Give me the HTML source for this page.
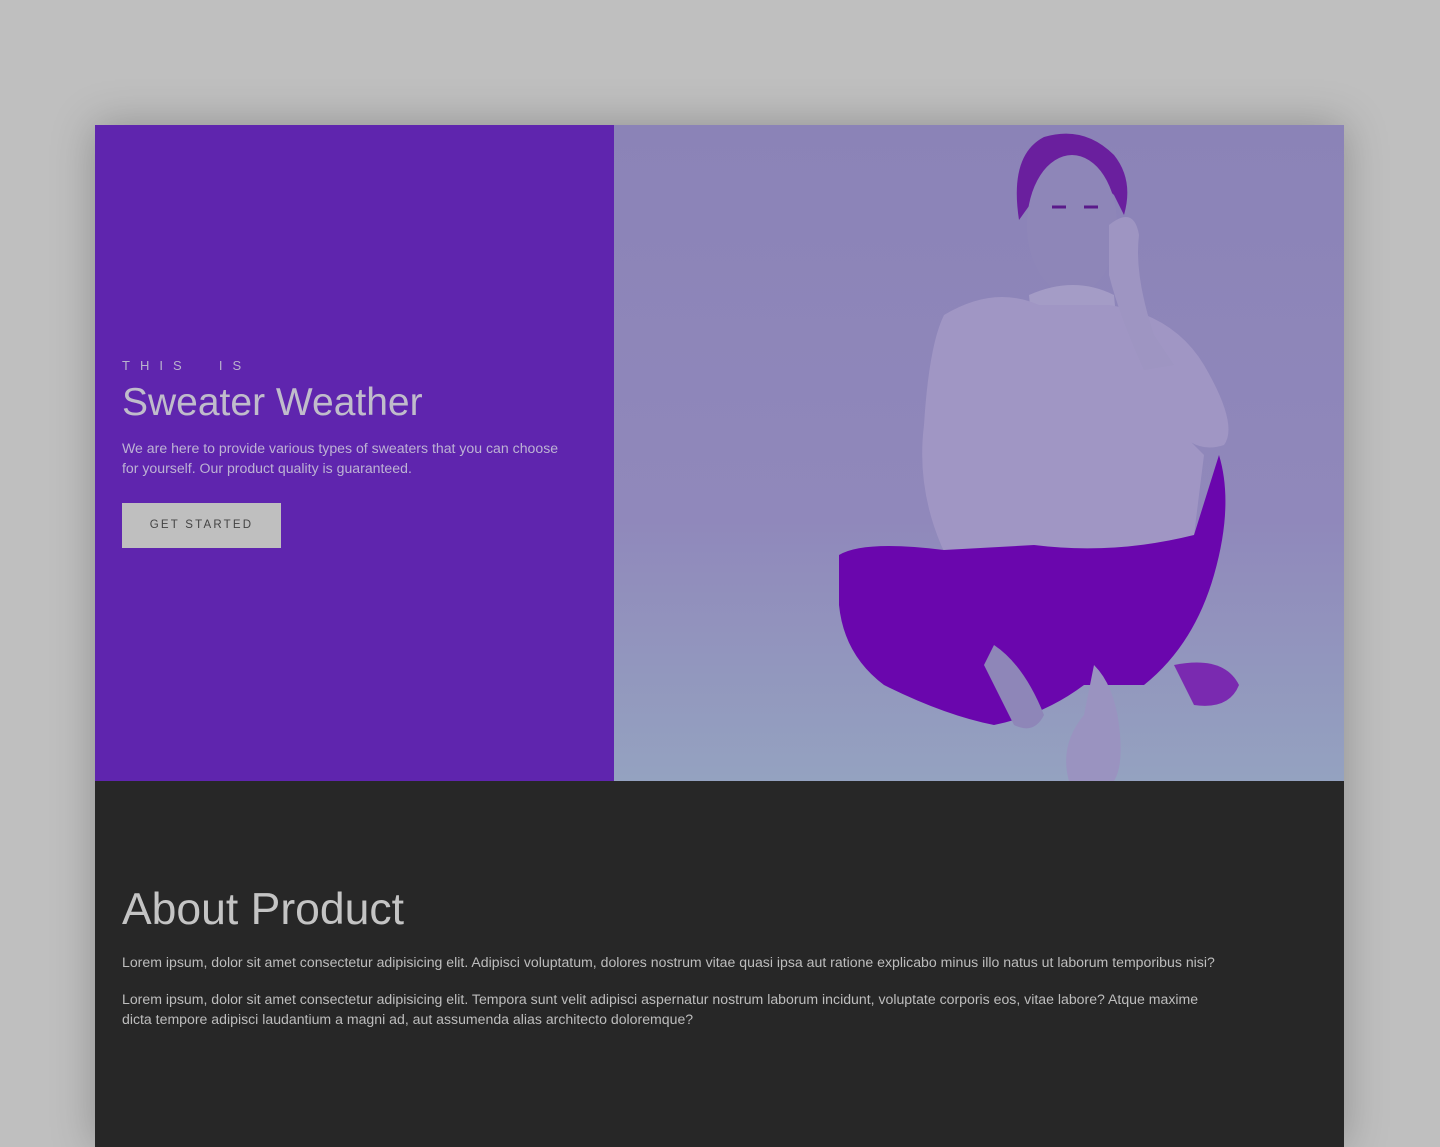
<!DOCTYPE html>
<html><head><meta charset="utf-8">
<style>
*{margin:0;padding:0;box-sizing:border-box}
html,body{width:1440px;height:1147px;overflow:hidden;background:#bfbfbf;font-family:"Liberation Sans",sans-serif}
.card{position:absolute;left:95px;top:125px;width:1249px;height:1022px;box-shadow:0 0 40px rgba(0,0,0,.25)}
.left{position:absolute;left:0;top:0;width:519px;height:656px;background:#5f25ae}
.right{position:absolute;left:519px;top:0;width:730px;height:656px;overflow:hidden}
.dark{position:absolute;left:0;top:656px;width:1249px;height:366px;background:#272727}
.t{position:absolute;left:27px;color:#bdbdbd;white-space:nowrap}
</style></head><body>
<div class="card">
<div class="left">
<div class="t" style="top:233px;font-size:13px;letter-spacing:10px;color:#b9b3cc">THIS&nbsp;&nbsp;IS</div>
<div class="t" style="top:256px;font-size:39px;color:#c0bccb">Sweater Weather</div>
<div class="t" style="top:313px;font-size:14.1px;line-height:20px;color:#bdb3d4">We are here to provide various types of sweaters that you can choose<br>for yourself. Our product quality is guaranteed.</div>
<div style="position:absolute;left:27px;top:378px;width:159px;height:45px;background:#bfbfbf;color:#444;font-size:11.5px;letter-spacing:2.2px;text-align:center;line-height:45px">GET STARTED</div>
</div>
<div class="right">
<svg width="730" height="656" viewBox="0 0 730 656">
<defs><linearGradient id="bg" x1="0" y1="0" x2="0" y2="1"><stop offset="0" stop-color="#8b83b7"/><stop offset="0.6" stop-color="#9088bb"/><stop offset="1" stop-color="#94a2c0"/></linearGradient></defs>
<rect width="730" height="656" fill="url(#bg)"/>
<path d="M405 95 Q395 30 430 12 Q470 0 500 30 Q520 55 510 90 L500 70 Q470 40 430 60 Z" fill="#6a1f9e"/>
<ellipse cx="458" cy="100" rx="45" ry="70" fill="#8e86b8"/>
<path d="M438 82 h14 M470 82 h14" stroke="#5a1a8a" stroke-width="3"/>
<path d="M415 170 Q460 150 500 170 L505 225 Q460 235 420 225 Z" fill="#a49cc6"/>
<path d="M330 190 Q380 160 425 180 L495 180 Q560 190 590 240 Q625 300 610 320 Q580 330 560 300 L590 330 L580 410 Q500 430 420 420 L380 470 Q360 480 345 455 Q300 380 310 300 Q315 220 330 190 Z" fill="#a096c4"/>
<path d="M495 100 Q520 80 525 110 Q520 150 540 210 L560 240 L530 245 Q505 190 495 150 Z" fill="#9e95c2"/>
<path d="M225 430 Q250 415 330 425 L420 420 Q500 430 580 410 L605 330 Q620 380 600 450 Q580 520 530 560 L470 560 Q430 590 380 600 Q330 590 270 560 Q230 530 225 480 Z" fill="#6a06ad"/>
<path d="M380 520 Q410 540 430 590 Q420 610 400 600 Q385 570 370 540 Z" fill="#8e86b8"/>
<path d="M480 540 Q500 560 505 600 Q510 640 500 656 L455 656 Q445 620 470 590 Z" fill="#9a93c0"/>
<path d="M560 540 Q610 530 625 560 Q615 585 580 580 Z" fill="#7a2ab0"/>
</svg>
</div>
<div class="dark">
<div class="t" style="top:104px;font-size:44.5px;color:#c4c4c4">About Product</div>
<div class="t" style="top:171px;font-size:14.1px;line-height:20px">Lorem ipsum, dolor sit amet consectetur adipisicing elit. Adipisci voluptatum, dolores nostrum vitae quasi ipsa aut ratione explicabo minus illo natus ut laborum temporibus nisi?</div>
<div class="t" style="top:208px;font-size:14.1px;line-height:20px">Lorem ipsum, dolor sit amet consectetur adipisicing elit. Tempora sunt velit adipisci aspernatur nostrum laborum incidunt, voluptate corporis eos, vitae labore? Atque maxime<br>dicta tempore adipisci laudantium a magni ad, aut assumenda alias architecto doloremque?</div>
</div>
</div>
</body></html>
